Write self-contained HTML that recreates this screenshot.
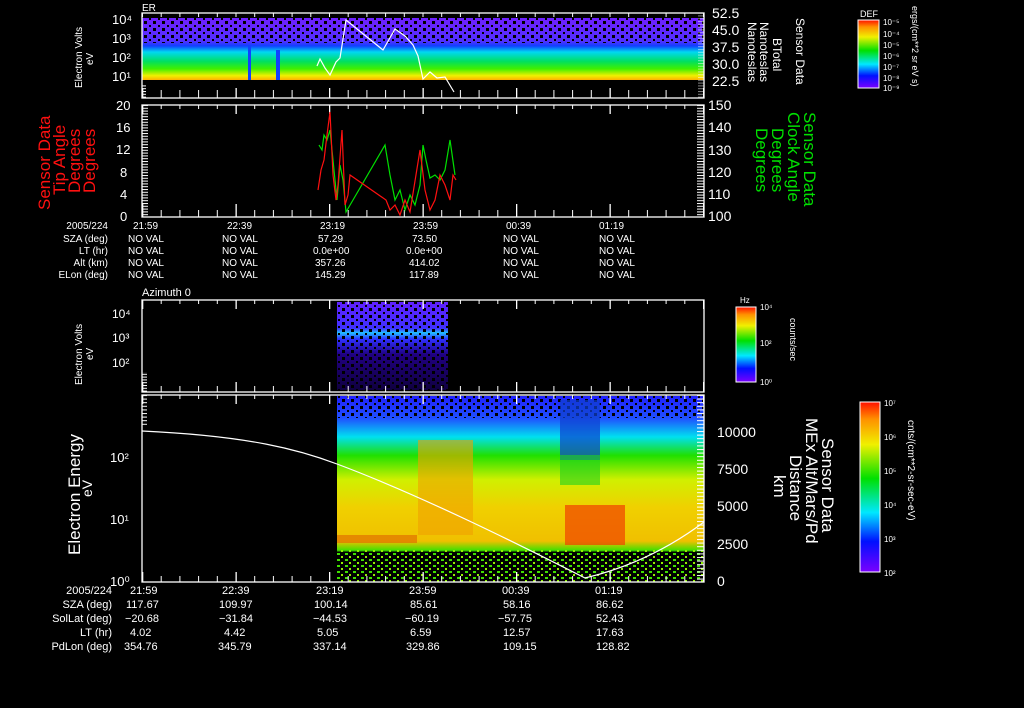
<!DOCTYPE html>
<html><head><meta charset="utf-8"><style>
html,body{margin:0;padding:0;background:#000;width:1024px;height:708px;overflow:hidden}
svg{display:block}
text{font-family:"Liberation Sans",sans-serif;fill:#fff}
</style></head><body>
<svg width="1024" height="708" viewBox="0 0 1024 708" xmlns="http://www.w3.org/2000/svg">
<defs>
<linearGradient id="rb" x1="0" y1="1" x2="0" y2="0">
<stop offset="0" stop-color="#7a00ff"/><stop offset="0.18" stop-color="#0010ff"/><stop offset="0.35" stop-color="#00e8ff"/><stop offset="0.55" stop-color="#00e000"/><stop offset="0.75" stop-color="#f0f000"/><stop offset="0.9" stop-color="#ff9000"/><stop offset="1" stop-color="#ff1000"/>
</linearGradient>
<linearGradient id="p1" x1="0" y1="0" x2="0" y2="1">
<stop offset="0" stop-color="#7020ff"/><stop offset="0.38" stop-color="#5030ff"/><stop offset="0.45" stop-color="#1040ff"/><stop offset="0.55" stop-color="#00d8f0"/><stop offset="0.7" stop-color="#00e060"/><stop offset="0.82" stop-color="#40f000"/><stop offset="0.93" stop-color="#f0f000"/><stop offset="1" stop-color="#ffb000"/>
</linearGradient>
<linearGradient id="p4" x1="0" y1="0" x2="0" y2="1">
<stop offset="0" stop-color="#2020ff"/><stop offset="0.12" stop-color="#2050ff"/><stop offset="0.22" stop-color="#00e0f0"/><stop offset="0.32" stop-color="#20e000"/><stop offset="0.45" stop-color="#d0f000"/><stop offset="0.6" stop-color="#f0d000"/><stop offset="0.78" stop-color="#f0c000"/><stop offset="0.83" stop-color="#40e000"/><stop offset="0.84" stop-color="#000"/><stop offset="1" stop-color="#000"/>
</linearGradient>
<linearGradient id="p3" x1="0" y1="0" x2="0" y2="1">
<stop offset="0" stop-color="#6020ff"/><stop offset="0.3" stop-color="#4030ff"/><stop offset="0.35" stop-color="#20c0ff"/><stop offset="0.42" stop-color="#3030ff"/><stop offset="0.6" stop-color="#200080"/><stop offset="1" stop-color="#100040"/>
</linearGradient>
<pattern id="spk" width="9" height="7" patternUnits="userSpaceOnUse"><rect x="0" y="0" width="3" height="3" fill="#000"/><rect x="5" y="4" width="2" height="2" fill="#000"/></pattern>
<pattern id="gsp" width="8" height="6" patternUnits="userSpaceOnUse"><rect x="1" y="1" width="3" height="2" fill="#40e000"/><rect x="5" y="4" width="2" height="2" fill="#90f000"/></pattern>
<pattern id="tmin" x="142" y="0" width="18.7" height="10" patternUnits="userSpaceOnUse"><rect x="0" y="0" width="1" height="10" fill="#fff"/></pattern>
<pattern id="tmaj" x="142" y="0" width="93.5" height="10" patternUnits="userSpaceOnUse"><rect x="0" y="0" width="1.3" height="10" fill="#fff"/></pattern>
<pattern id="ydense" x="0" y="105" width="10" height="2.8" patternUnits="userSpaceOnUse"><rect x="0" y="0" width="10" height="1" fill="#fff"/></pattern>
<pattern id="ydense4" x="0" y="395" width="10" height="3.6" patternUnits="userSpaceOnUse"><rect x="0" y="0" width="10" height="1" fill="#fff"/></pattern>
</defs>

<!-- Panel 1 -->
<text x="142" y="11" font-size="10">ER</text>
<rect x="142" y="18" width="562" height="62" fill="url(#p1)"/>
<rect x="142" y="18" width="562" height="25" fill="url(#spk)"/>
<rect x="248" y="45" width="3" height="35" fill="#1040ff"/>
<rect x="276" y="50" width="4" height="30" fill="#1040ff"/>
<rect x="142" y="13" width="562" height="85" fill="none" stroke="#fff" stroke-width="1.3"/>
<rect x="142" y="13" width="562" height="4" fill="url(#tmin)"/>
<rect x="142" y="90" width="562" height="8" fill="url(#tmin)"/>
<rect x="142" y="88" width="562" height="10" fill="url(#tmaj)"/>
<rect x="142" y="84" width="4" height="14" fill="url(#ydense)"/>
<rect x="698" y="13" width="6" height="85" fill="url(#ydense)" opacity="0.5"/>
<polyline points="317,66 320,59 325,68 330,75 336,62 340,58 346,20 383,50 395,29 405,36 413,45 418,56 423,79 430,72 437,78 445,77 454,92" fill="none" stroke="#fff" stroke-width="1.2"/>
<g font-size="13"><text x="112" y="24">10⁴</text><text x="112" y="43">10³</text><text x="112" y="62">10²</text><text x="112" y="81">10¹</text></g>
<text transform="translate(82,88) rotate(-90)" font-size="10">Electron Volts</text>
<text transform="translate(93,65) rotate(-90)" font-size="10">eV</text>
<g font-size="14"><text x="712" y="18">52.5</text><text x="712" y="35">45.0</text><text x="712" y="52">37.5</text><text x="712" y="69">30.0</text><text x="712" y="86">22.5</text></g>
<g font-size="12"><text transform="translate(796,18) rotate(90)">Sensor Data</text><text transform="translate(773,38) rotate(90)">BTotal</text><text transform="translate(760,22) rotate(90)">Nanoteslas</text><text transform="translate(748,22) rotate(90)">Nanoteslas</text></g>
<text x="860" y="17" font-size="9">DEF</text>
<rect x="858" y="20" width="21" height="68" fill="url(#rb)" stroke="#fff"/>
<g font-size="8"><text x="883" y="25">10⁻⁵</text><text x="883" y="37">10⁻⁴</text><text x="883" y="48">10⁻⁵</text><text x="883" y="59">10⁻⁶</text><text x="883" y="70">10⁻⁷</text><text x="883" y="81">10⁻⁸</text><text x="883" y="91">10⁻⁹</text></g>
<text transform="translate(912,6) rotate(90)" font-size="9">ergs/(cm**2 sr eV s)</text>

<!-- Panel 2 -->
<rect x="142" y="105" width="562" height="112" fill="none" stroke="#fff" stroke-width="1.3"/>
<rect x="142" y="105" width="562" height="4" fill="url(#tmin)"/>
<rect x="142" y="105" width="562" height="9" fill="url(#tmaj)"/>
<rect x="142" y="210" width="562" height="7" fill="url(#tmin)"/>
<rect x="142" y="204" width="562" height="13" fill="url(#tmaj)"/>
<rect x="142" y="105" width="6" height="112" fill="url(#ydense)"/>
<rect x="697" y="105" width="7" height="112" fill="url(#ydense)"/>
<g font-size="13"><text x="116" y="110">20</text><text x="116" y="132">16</text><text x="116" y="154">12</text><text x="120" y="177">8</text><text x="120" y="199">4</text><text x="120" y="221">0</text></g>
<g font-size="14"><text x="708" y="110">150</text><text x="708" y="132">140</text><text x="708" y="155">130</text><text x="708" y="177">120</text><text x="708" y="199">110</text><text x="708" y="221">100</text></g>
<polyline points="319,145 322,150 324,135 327,140 330,130 333,160 337,200 340,165 343,180 346,212 385,145 390,175 395,200 400,190 405,210 410,195 415,205 420,185 423,145 426,160 430,178 435,175 440,180 445,170 450,140 455,175" fill="none" stroke="#00e000" stroke-width="1.2"/>
<polyline points="318,190 321,170 324,160 327,135 330,112 333,175 336,200 338,185 342,130 345,205 348,195 350,175 386,200 390,210 395,205 400,215 405,200 410,212 420,150 425,190 430,210 435,200 440,175 445,185 450,200 453,175 456,180" fill="none" stroke="#ff1010" stroke-width="1.2"/>
<g font-size="17"><text transform="translate(50,210) rotate(-90)" style="fill:#ff1010">Sensor Data</text><text transform="translate(65,195) rotate(-90)" style="fill:#ff1010">Tip Angle</text><text transform="translate(80,193) rotate(-90)" style="fill:#ff1010">Degrees</text><text transform="translate(95,193) rotate(-90)" style="fill:#ff1010">Degrees</text></g>
<g font-size="17"><text transform="translate(804,112) rotate(90)" style="fill:#00e000">Sensor Data</text><text transform="translate(788,112) rotate(90)" style="fill:#00e000">Clock Angle</text><text transform="translate(772,128) rotate(90)" style="fill:#00e000">Degrees</text><text transform="translate(756,128) rotate(90)" style="fill:#00e000">Degrees</text></g>

<g font-size="10">
<text x="108" y="229" text-anchor="end">2005/224</text><text x="108" y="242" text-anchor="end">SZA (deg)</text><text x="108" y="254" text-anchor="end">LT (hr)</text><text x="108" y="266" text-anchor="end">Alt (km)</text><text x="108" y="278" text-anchor="end">ELon (deg)</text>
<text x="133" y="229">21:59</text><text x="227" y="229">22:39</text><text x="320" y="229">23:19</text><text x="413" y="229">23:59</text><text x="506" y="229">00:39</text><text x="599" y="229">01:19</text>
<text x="128" y="242">NO VAL</text><text x="222" y="242">NO VAL</text><text x="318" y="242">57.29</text><text x="412" y="242">73.50</text><text x="503" y="242">NO VAL</text><text x="599" y="242">NO VAL</text>
<text x="128" y="254">NO VAL</text><text x="222" y="254">NO VAL</text><text x="313" y="254">0.0e+00</text><text x="406" y="254">0.0e+00</text><text x="503" y="254">NO VAL</text><text x="599" y="254">NO VAL</text>
<text x="128" y="266">NO VAL</text><text x="222" y="266">NO VAL</text><text x="315" y="266">357.26</text><text x="409" y="266">414.02</text><text x="503" y="266">NO VAL</text><text x="599" y="266">NO VAL</text>
<text x="128" y="278">NO VAL</text><text x="222" y="278">NO VAL</text><text x="315" y="278">145.29</text><text x="409" y="278">117.89</text><text x="503" y="278">NO VAL</text><text x="599" y="278">NO VAL</text>
</g>

<!-- Panel 3 -->
<text x="142" y="296" font-size="11">Azimuth 0</text>
<rect x="337" y="302" width="111" height="88" fill="url(#p3)"/>
<rect x="337" y="302" width="111" height="88" fill="url(#spk)"/>
<rect x="142" y="300" width="562" height="92" fill="none" stroke="#fff" stroke-width="1.3"/>
<rect x="142" y="300" width="562" height="4" fill="url(#tmin)"/>
<rect x="142" y="300" width="562" height="9" fill="url(#tmaj)"/>
<rect x="142" y="386" width="562" height="6" fill="url(#tmin)"/>
<rect x="142" y="382" width="562" height="10" fill="url(#tmaj)"/>
<rect x="142" y="372" width="5" height="20" fill="url(#ydense)"/>
<g font-size="12"><text x="112" y="318">10⁴</text><text x="112" y="342">10³</text><text x="112" y="367">10²</text></g>
<text transform="translate(82,385) rotate(-90)" font-size="10">Electron Volts</text>
<text transform="translate(93,360) rotate(-90)" font-size="10">eV</text>
<text x="740" y="303" font-size="8">Hz</text>
<rect x="736" y="307" width="20" height="75" fill="url(#rb)" stroke="#fff"/>
<g font-size="8"><text x="760" y="310">10⁴</text><text x="760" y="346">10²</text><text x="760" y="385">10⁰</text></g>
<text transform="translate(790,318) rotate(90)" font-size="9">counts/sec</text>

<!-- Panel 4 -->
<rect x="337" y="396" width="367" height="186" fill="url(#p4)"/>
<rect x="337" y="396" width="367" height="22" fill="url(#spk)"/>
<rect x="418" y="440" width="55" height="95" fill="#f0a000" opacity="0.6"/>
<rect x="560" y="400" width="40" height="60" fill="#1040d0" opacity="0.7"/>
<rect x="560" y="455" width="40" height="30" fill="#20d020" opacity="0.6"/>
<rect x="565" y="505" width="60" height="40" fill="#f04000" opacity="0.7"/>
<rect x="337" y="535" width="80" height="8" fill="#e07000" opacity="0.7"/>
<rect x="337" y="550" width="367" height="32" fill="url(#gsp)"/>
<rect x="142" y="395" width="562" height="187" fill="none" stroke="#fff" stroke-width="1.3"/>
<rect x="142" y="395" width="562" height="4" fill="url(#tmin)"/>
<rect x="142" y="395" width="562" height="9" fill="url(#tmaj)"/>
<rect x="142" y="576" width="562" height="6" fill="url(#tmin)"/>
<rect x="142" y="572" width="562" height="10" fill="url(#tmaj)"/>
<rect x="142" y="395" width="5" height="30" fill="url(#ydense4)"/>
<rect x="697" y="395" width="7" height="187" fill="url(#ydense4)"/>
<path d="M142,431 C250,436 300,450 337,464 C420,495 520,545 585,578 C640,565 680,540 704,522" fill="none" stroke="#fff" stroke-width="1.2"/>
<g font-size="13"><text x="110" y="462">10²</text><text x="110" y="524">10¹</text><text x="110" y="586">10⁰</text></g>
<text transform="translate(80,555) rotate(-90)" font-size="17">Electron Energy</text>
<text transform="translate(92,497) rotate(-90)" font-size="14">eV</text>
<g font-size="14"><text x="717" y="437">10000</text><text x="717" y="474">7500</text><text x="717" y="511">5000</text><text x="717" y="549">2500</text><text x="717" y="586">0</text></g>
<g font-size="17"><text transform="translate(822,438) rotate(90)">Sensor Data</text><text transform="translate(806,418) rotate(90)">MEx Alt/Mars/Pd</text><text transform="translate(790,455) rotate(90)">Distance</text><text transform="translate(774,475) rotate(90)">km</text></g>
<rect x="860" y="402" width="20" height="170" fill="url(#rb)" stroke="#fff"/>
<g font-size="8"><text x="884" y="406">10⁷</text><text x="884" y="440">10⁶</text><text x="884" y="474">10⁵</text><text x="884" y="508">10⁴</text><text x="884" y="542">10³</text><text x="884" y="576">10²</text></g>
<text transform="translate(908,420) rotate(90)" font-size="10">cnts/(cm**2-sr-sec-eV)</text>

<g font-size="11">
<text x="112" y="594" text-anchor="end">2005/224</text><text x="112" y="608" text-anchor="end">SZA (deg)</text><text x="112" y="622" text-anchor="end">SolLat (deg)</text><text x="112" y="636" text-anchor="end">LT (hr)</text><text x="112" y="650" text-anchor="end">PdLon (deg)</text>
<text x="130" y="594">21:59</text><text x="222" y="594">22:39</text><text x="316" y="594">23:19</text><text x="409" y="594">23:59</text><text x="502" y="594">00:39</text><text x="595" y="594">01:19</text>
<text x="126" y="608">117.67</text><text x="219" y="608">109.97</text><text x="314" y="608">100.14</text><text x="410" y="608">85.61</text><text x="503" y="608">58.16</text><text x="596" y="608">86.62</text>
<text x="125" y="622">−20.68</text><text x="219" y="622">−31.84</text><text x="313" y="622">−44.53</text><text x="405" y="622">−60.19</text><text x="498" y="622">−57.75</text><text x="596" y="622">52.43</text>
<text x="130" y="636">4.02</text><text x="224" y="636">4.42</text><text x="317" y="636">5.05</text><text x="410" y="636">6.59</text><text x="503" y="636">12.57</text><text x="596" y="636">17.63</text>
<text x="124" y="650">354.76</text><text x="218" y="650">345.79</text><text x="313" y="650">337.14</text><text x="406" y="650">329.86</text><text x="503" y="650">109.15</text><text x="596" y="650">128.82</text>
</g>
</svg>
</body></html>
